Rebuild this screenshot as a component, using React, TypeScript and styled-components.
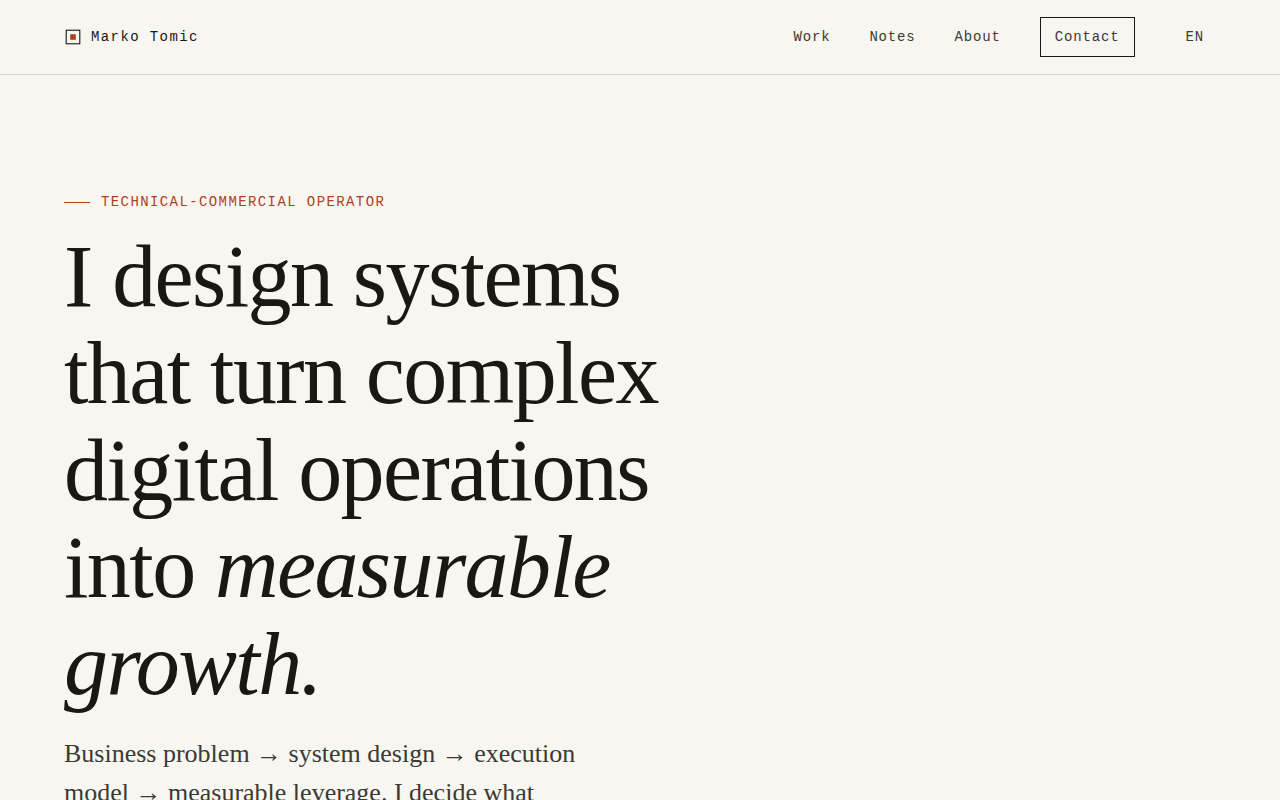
import React from "react";
import styled, { createGlobalStyle } from "styled-components";

const color = {
  paper: "#f7f6f1",
  ink: "#191814",
  text: "#3b3a35",
  accent: "#b0401c",
  rule: "#d6d5cd",
};

const mono = `"Liberation Mono", monospace`;
const serif = `"Liberation Serif", serif`;

const GlobalStyle = createGlobalStyle`
  *, *::before, *::after { box-sizing: border-box; }
  body {
    margin: 0;
    background: ${color.paper};
    color: ${color.ink};
    font-family: ${serif};
  }
`;

const Header = styled.header`
  display: flex;
  align-items: center;
  justify-content: space-between;
  padding: 17px 64px;
  border-bottom: 1px solid ${color.rule};
  font-family: ${mono};
  font-size: 14px;
  line-height: 20px;
`;

const Brand = styled.a`
  display: inline-flex;
  align-items: center;
  gap: 9px;
  color: ${color.ink};
  letter-spacing: 0.1em;
  text-decoration: none;
`;

const Nav = styled.nav`
  display: flex;
  align-items: center;
  gap: 39px;
`;

const NavLink = styled.a<{ $boxed?: boolean }>`
  padding: ${(p) => (p.$boxed ? "9px 14px" : "0")};
  border: ${(p) => (p.$boxed ? `1px solid ${color.ink}` : "0")};
  color: ${color.text};
  letter-spacing: 0.06em;
  text-decoration: none;
`;

const LanguageButton = styled.button`
  padding: 0 12px;
  border: 0;
  background: none;
  color: ${color.text};
  font: inherit;
  letter-spacing: 0.06em;
  cursor: pointer;
`;

const Hero = styled.main`
  padding: 116px 64px 96px;
`;

const Eyebrow = styled.p`
  display: flex;
  align-items: center;
  gap: 11px;
  margin: 0 0 15px;
  color: ${color.accent};
  font-family: ${mono};
  font-size: 14px;
  line-height: 22px;
  letter-spacing: 0.1em;
  text-transform: uppercase;

  &::before {
    content: "";
    width: 26px;
    height: 1px;
    background: currentColor;
  }
`;

const Title = styled.h1`
  max-width: 640px;
  margin: 0 0 21px;
  font-size: 88px;
  font-weight: 400;
  line-height: 97px;
  letter-spacing: -0.018em;
`;

const Lead = styled.p`
  max-width: 560px;
  margin: 0;
  color: ${color.text};
  font-size: 26px;
  line-height: 39px;
`;

const BrandMark = () => (
  <svg width="18" height="18" viewBox="0 0 18 18" fill="none" aria-hidden="true">
    <rect x="2.2" y="2.2" width="13.6" height="13.6" stroke={color.ink} strokeWidth="1.1" />
    <rect x="6.2" y="6.2" width="5.6" height="5.6" fill={color.accent} />
  </svg>
);

export default function App() {
  return (
    <>
      <GlobalStyle />
      <Header>
        <Brand href="#top">
          <BrandMark />
          Marko Tomic
        </Brand>
        <Nav aria-label="Main">
          <NavLink href="#work">Work</NavLink>
          <NavLink href="#notes">Notes</NavLink>
          <NavLink href="#about">About</NavLink>
          <NavLink href="#contact" $boxed>Contact</NavLink>
          <LanguageButton type="button">EN</LanguageButton>
        </Nav>
      </Header>
      <Hero id="top">
        <Eyebrow>Technical-commercial operator</Eyebrow>
        <Title>
          I design systems that turn complex digital operations into <em>measurable growth.</em>
        </Title>
        <Lead>
          Business problem → system design → execution model → measurable leverage. I decide what
        </Lead>
      </Hero>
    </>
  );
}
